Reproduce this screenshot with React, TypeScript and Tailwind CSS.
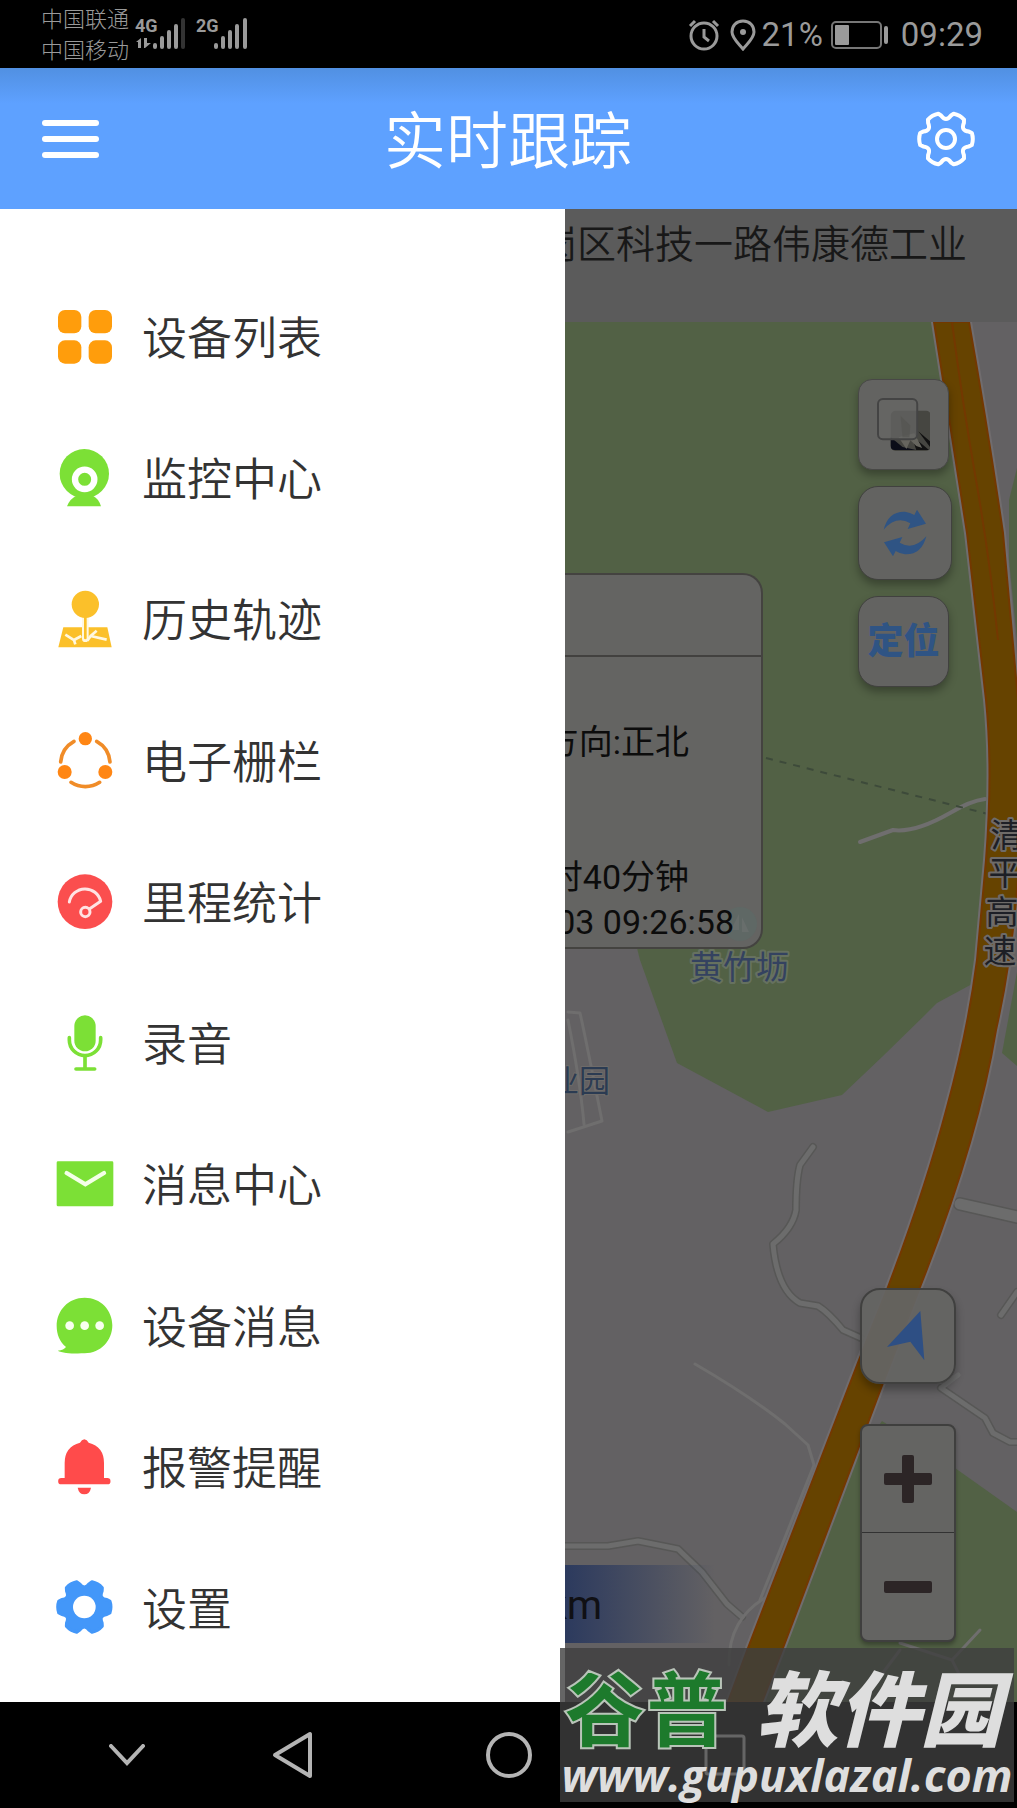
import { useState, type ReactNode } from 'react'

const point = (r: number, deg: number) => {
  const a = (deg * Math.PI) / 180
  return `${(r * Math.cos(a)).toFixed(1)} ${(r * Math.sin(a)).toFixed(1)}`
}

// 六齿齿轮，中心在原点
const gearPath = (r: number) =>
  [0, 60, 120, 180, 240, 300]
    .map(
      (deg, i) =>
        `${i === 0 ? 'M' : 'L'}${point(r * 0.98, deg - 13)} Q${point(r * 1.03, deg)} ${point(r * 0.98, deg + 13)} L${point(r * 0.89, deg + 18)} Q${point(r * 0.62, deg + 30)} ${point(r * 0.89, deg + 42)}`
    )
    .join(' ') + 'Z'

interface MenuItem {
  id: string
  label: string
  icon: ReactNode
}

const menuItems: MenuItem[] = [
  {
    id: 'devices',
    label: '设备列表',
    icon: (
      <g fill="#ff9d0c">
        <rect x="6" y="6" width="70" height="70" rx="21" />
        <rect x="98" y="6" width="70" height="70" rx="21" />
        <rect x="6" y="97" width="70" height="70" rx="21" />
        <rect x="98" y="97" width="70" height="70" rx="21" />
      </g>
    ),
  },
  {
    id: 'monitor',
    label: '监控中心',
    icon: (
      <>
        <circle cx="85" cy="74" r="74" fill="#7ce036" />
        <path d="M33 172Q42 148 62 140H110Q128 148 135 172Z" fill="#7ce036" />
        <circle cx="86" cy="91" r="29" fill="#7ce036" stroke="#fff" strokeWidth="19" />
      </>
    ),
  },
  {
    id: 'history',
    label: '历史轨迹',
    icon: (
      <>
        <path d="M22 112H154L167 172H7Z" fill="#fbc02a" />
        <path
          d="M28 134L54 150L58 163M54 150L76 138M94 152L104 138L122 122M104 138L152 149"
          fill="none"
          stroke="#fff8e0"
          strokeWidth="8"
        />
        <path d="M88 84V146" stroke="#fff8e0" strokeWidth="20" strokeLinecap="round" />
        <path d="M88 80V144" stroke="#fbc02a" strokeWidth="8" strokeLinecap="round" />
        <circle cx="88" cy="43" r="41" fill="#fbc02a" />
      </>
    ),
  },
  {
    id: 'fence',
    label: '电子栅栏',
    icon: (
      <>
        <g fill="none" stroke="#f08c28" strokeWidth="11" strokeLinecap="round">
          <path d="M54 28A78 78 0 0 0 14 90" />
          <path d="M122 28A78 78 0 0 1 162 90" />
          <path d="M45 151A78 78 0 0 0 131 151" />
        </g>
        <g fill="#ff8614">
          <circle cx="88" cy="20" r="20" />
          <circle cx="26" cy="120" r="21" />
          <circle cx="148" cy="120" r="21" />
        </g>
      </>
    ),
  },
  {
    id: 'mileage',
    label: '里程统计',
    icon: (
      <>
        <circle cx="87" cy="86" r="82" fill="#fb4e4e" />
        <g fill="none" stroke="#ffe3e3" strokeWidth="9" strokeLinecap="round" strokeLinejoin="round">
          <path d="M40 87A48 48 0 0 1 134 85L100 108" />
          <circle cx="88" cy="117" r="14" />
        </g>
      </>
    ),
  },
  {
    id: 'record',
    label: '录音',
    icon: (
      <>
        <rect x="55" y="4" width="64" height="108" rx="32" fill="#7ce036" />
        <g fill="none" stroke="#7ce036" strokeWidth="11" strokeLinecap="round">
          <path d="M40 71V78A47 47 0 0 0 134 78V71" />
          <path d="M87 126V164M60 165H116" />
        </g>
      </>
    ),
  },
  {
    id: 'messages',
    label: '消息中心',
    icon: (
      <>
        <rect x="2" y="19" width="170" height="135" rx="4" fill="#7ce036" />
        <path
          d="M32 54L88 88L144 54"
          fill="none"
          stroke="#f4ffe8"
          strokeWidth="13"
          strokeLinecap="round"
        />
      </>
    ),
  },
  {
    id: 'deviceMessages',
    label: '设备消息',
    icon: (
      <>
        <path
          d="M86 2C134 2 169 39 169 85S134 169 86 169C52 170 20 169 5 161Q24 159 30 150C11 135 2 112 2 87C2 39 38 2 86 2Z"
          fill="#7ce036"
        />
        <g fill="#f8fff0">
          <circle cx="41" cy="86" r="13" />
          <circle cx="86" cy="86" r="13" />
          <circle cx="131" cy="86" r="13" />
        </g>
      </>
    ),
  },
  {
    id: 'alarm',
    label: '报警提醒',
    icon: (
      <g fill="#ff4b4b">
        <path d="M85 4Q93 5 98 14Q144 26 144 75V120H154A9 9 0 0 1 154 139H16A9 9 0 0 1 16 120H26V75Q26 26 72 14Q77 5 85 4Z" />
        <path d="M65 149H105Q101 169 85 169Q69 169 65 149Z" />
      </g>
    ),
  },
  {
    id: 'settings',
    label: '设置',
    icon: (
      <g transform="translate(85 84)">
        <path d={gearPath(80)} fill="#4397f9" stroke="#4397f9" strokeWidth="10" strokeLinejoin="round" />
        <circle r="34" fill="#fff" />
      </g>
    ),
  },
]

function StatusBar() {
  return (
    <div className="flex h-[68px] shrink-0 items-center bg-black pl-[41px] pr-[34px] text-[#9a9a9a]">
      <div className="pt-0.5 text-[22px] leading-[31px] font-light">
        <p>中国联通</p>
        <p>中国移动</p>
      </div>
      <svg width="114" height="34" viewBox="135 17 114 34" className="ml-[6px] overflow-visible" fill="#9a9a9a">
        <text x="135" y="32" fontSize="18" fontWeight="700" fontFamily="Roboto, sans-serif">
          4G
        </text>
        <text x="196" y="32" fontSize="18" fontWeight="700" fontFamily="Roboto, sans-serif">
          2G
        </text>
        <path d="M136 42L141 38V48H138V42ZM144 38H147V43H151L145 48H144Z" />
        <g strokeWidth="4" strokeLinecap="round" stroke="#9a9a9a">
          <path d="M155 45V47M162 38V47M169 32V47M176 26V47" />
          <path d="M183 20V47" stroke="#333" />
          <path d="M216 45V47M223 38V47M230 32V47M237 26V47M245 20V47" />
        </g>
      </svg>
      <div className="ml-auto flex items-center pt-0.5 text-[33px] leading-10">
        <svg width="32" height="32" viewBox="0 0 32 32" fill="none" stroke="currentColor" strokeWidth="3">
          <circle cx="16" cy="17" r="13" />
          <path d="M16 10V18L21 22M2 7L7 2M25 2L30 7" />
        </svg>
        <svg width="26" height="32" viewBox="0 0 26 32" fill="none" className="ml-2.5">
          <path
            d="M13 2C6 2 2 7 2 13C2 19 8 24 13 30C18 24 24 19 24 13C24 7 20 2 13 2Z"
            stroke="currentColor"
            strokeWidth="3"
          />
          <circle cx="13" cy="13" r="3" fill="currentColor" />
        </svg>
        <span className="ml-1.5">21%</span>
        <svg width="58" height="28" viewBox="0 0 58 28" fill="none" className="ml-2">
          <rect x="1" y="1" width="49" height="26" rx="4" stroke="#777" strokeWidth="2" />
          <rect x="4" y="4" width="14" height="20" rx="1" fill="currentColor" />
          <path d="M55 7V21" stroke="currentColor" strokeWidth="4" strokeLinecap="round" />
        </svg>
        <span className="ml-3">09:29</span>
      </div>
    </div>
  )
}

function MapCanvas() {
  return (
    <svg
      className="absolute inset-0 h-full w-full"
      viewBox="565 322 452 1380"
      preserveAspectRatio="xMinYMin slice"
      fontFamily="Roboto, 'Noto Sans CJK SC', sans-serif"
    >
      <rect x="565" y="322" width="2000" height="1380" fill="#636163" />

      {/* 绿地 */}
      <g fill="#526145">
        <path d="M565 322H934L967 533L988 700V813L974 983L937 1003Q890 1050 842 1095L768 1112L677 1063L640 960L600 800L565 760Z" />
        <path d="M1017 468L1009 500V560L1017 640Z" />
        <path d="M1017 972L1002 1053L1017 1066Z" />
        <path d="M848 1470L882 1421L955 1468L1017 1512V1702H740Z" />
      </g>

      {/* 小路 */}
      <g fill="none" strokeLinecap="round" strokeLinejoin="round">
        <g stroke="#575756" strokeWidth="8">
          <path d="M813 1147L800 1165Q796 1180 796 1210Q793 1228 773 1244Q777 1290 800 1303L818 1306Q828 1312 843 1330L861 1338" />
          <path d="M565 1546H608L638 1541L678 1549L702 1572L727 1604L742 1617" />
          <path d="M941 1388L985 1418L993 1433L1010 1442H1017" />
          <path d="M1001 1315L1017 1292" />
          <path d="M960 1204L1017 1217" strokeWidth="14" />
        </g>
        <g stroke="#6c6c6c" strokeWidth="5">
          <path d="M813 1147L800 1165Q796 1180 796 1210Q793 1228 773 1244Q777 1290 800 1303L818 1306Q828 1312 843 1330L861 1338" />
          <path d="M565 1546H608L638 1541L678 1549L702 1572L727 1604L742 1617" />
          <path d="M941 1388L958 1375M941 1388L985 1418L993 1433L1010 1442H1017" />
          <path d="M1001 1315L1017 1292" />
          <path d="M960 1204L1017 1217" strokeWidth="11" />
        </g>
        <g stroke="#6f6e6e" strokeWidth="3">
          <path d="M695 1364Q750 1396 785 1424L808 1445L814 1465L760 1600" />
          <path d="M765 1598Q728 1620 729 1665" />
          <path d="M568 1012L580 1013Q584 1030 602 1121L568 1132M568 1020Q580 1080 584 1124" />
          <path d="M860 842L893 830Q915 833 950 813Q970 801 985 799" strokeWidth="4" />
          <path d="M900 1643L952 1660L980 1630M952 1660L962 1680M900 1650L870 1690" />
        </g>
        <path d="M766 758L992 815" stroke="#3d4a3a" strokeWidth="2" strokeDasharray="7 7" strokeLinecap="butt" />
      </g>

      {/* 高速 */}
      <path
        d="M934 322Q946 400 967 533L986 700Q993 770 986 860L977 960Q968 1030 947 1107Q925 1190 888 1287L859 1360L748 1648L728 1702H762L783 1648L883 1383L920 1287Q978 1140 996 1030Q1014 950 1020 850Q1022 770 1018 700L1003 533Q988 430 969 322Z"
        fill="#664300"
        stroke="#706c6e"
        strokeWidth="6"
      />
      <path
        d="M934 322Q946 400 967 533L986 700Q993 770 986 860L977 960Q968 1030 947 1107Q925 1190 888 1287L859 1360L748 1648L728 1702H762L783 1648L883 1383L920 1287Q978 1140 996 1030Q1014 950 1020 850Q1022 770 1018 700L1003 533Q988 430 969 322Z"
        fill="#664300"
        stroke="#733800"
        strokeWidth="2"
      />
      <path d="M952 322Q962 400 976 480T998 640" fill="none" stroke="#733800" strokeWidth="2" />

      {/* 地名 */}
      <g fontSize="33" stroke="#6e6b69" strokeWidth="4" paintOrder="stroke" strokeLinejoin="round">
        <g fill="#1d1f26" textAnchor="middle">
          <text x="1007" y="847">清</text>
          <text x="1005" y="885">平</text>
          <text x="1002" y="924">高</text>
          <text x="1000" y="963">速</text>
        </g>
        <text x="690" y="979" fill="#344260" stroke="#66715f">
          黄竹坜
        </text>
        <text x="610" y="1092" fontSize="31" textAnchor="end" fill="#2b3b52" strokeWidth="2">
          业园
        </text>
      </g>
    </svg>
  )
}

function InfoCard() {
  return (
    <div className="absolute top-[251px] left-0 w-[198px] overflow-hidden rounded-r-[20px] border-2 border-l-0 border-[#444340] bg-[#646462] pb-[2px] text-[34px] leading-[45px] whitespace-nowrap text-[#0c0c0c]">
      <svg width="34" height="34" viewBox="0 0 34 34" className="absolute right-1 bottom-1.5">
        <circle cx="17" cy="17" r="17" fill="#5f6865" />
        <path d="M16 7V23H8ZM19 10L26 25H19Z" fill="#686e6c" />
      </svg>
      <div className="h-[82px] border-b-2 border-[#42413f]" />
      <div className="relative pt-[63px]">
        <p className="flex justify-end pr-[72px]">方向:正北</p>
        <p className="mt-[90px] flex justify-end pr-[72px]">时40分钟</p>
        <p className="flex justify-end pr-[27px]">03 09:26:58</p>
      </div>
    </div>
  )
}

function MapPane() {
  const [zoom, setZoom] = useState(16)

  return (
    <section className="flex min-w-0 flex-1 flex-col overflow-hidden bg-[#5b5b5b]">
      <div className="flex h-[113px] justify-end overflow-hidden pt-2 pr-[50px]">
        <p className="text-[39px] leading-[56px] font-[350] whitespace-nowrap text-[#181818]">
          岗区科技一路伟康德工业
        </p>
      </div>
      <div className="relative flex-1 overflow-hidden" data-zoom={zoom}>
        <MapCanvas />
        <InfoCard />

        {/* 右上角按钮 */}
        <div className="absolute top-[57px] right-[65px] flex flex-col items-start gap-4">
          <button
            aria-label="图层"
            className="h-[91px] w-[91px] rounded-[14px] border border-[#484846] bg-[#636361] p-[18px] shadow-[0_5px_8px_rgba(0,0,0,0.3)]"
          >
            <svg viewBox="0 0 54 54" className="h-full w-full">
              <rect x="14" y="13" width="41" height="41" rx="5" fill="#464641" />
              <path d="M14 40L26 50L40 53H18Q14 53 14 49Z" fill="#0b0d18" />
              <path d="M35 38L53 53H40ZM42 34L54 44V50Z" fill="#111" />
              <path d="M22 40L38 36L46 51L40 49L34 43L30 52Z" fill="#66655e" />
              <rect x="1" y="1" width="40" height="41" rx="5" fill="#666664" fillOpacity="0.75" stroke="#444" strokeWidth="2" />
              <path d="M24 18L34 28L33 40H26Z" fill="#535350" opacity="0.6" />
            </svg>
          </button>
          <button
            aria-label="刷新"
            className="flex h-[94px] w-[94px] items-center justify-center rounded-[20px] border border-[#41413f] bg-[#636361] shadow-[0_5px_8px_rgba(0,0,0,0.3)]"
          >
            <svg width="44" height="48" viewBox="-66 -72 132 144" fill="#2f5484">
              <path d="M-64 -10Q-50 -66 0 -64Q16 -62 28 -54L36 -70L63 -28L8 -12L16 -29Q-26 -54 -64 -10Z" />
              <path d="M-64 -10Q-50 -66 0 -64Q16 -62 28 -54L36 -70L63 -28L8 -12L16 -29Q-26 -54 -64 -10Z" transform="rotate(180)" />
            </svg>
          </button>
          <button className="h-[91px] w-[91px] rounded-[20px] border border-[#41413f] bg-[#636361] text-[36px] leading-[88px] font-black text-[#2f5484] shadow-[0_5px_8px_rgba(0,0,0,0.3)]">
            定位
          </button>
        </div>

        {/* 导航与缩放 */}
        <div className="absolute right-[61px] bottom-[60px] flex w-[96px] flex-col gap-10">
          <button
            aria-label="导航"
            className="flex h-[96px] items-center justify-center rounded-[20px] border-2 border-[#40403f] bg-[#646462]/95 pr-1 shadow-[0_6px_8px_rgba(0,0,0,0.3)]"
          >
            <svg width="38" height="50" viewBox="0 0 114 150" fill="#2e4f84">
              <path d="M100 0L112 148L70 92L0 108Z" />
            </svg>
          </button>
          <div className="overflow-hidden rounded-[8px] border-2 border-[#3f3f3e] bg-[#646462] shadow-[0_3px_4px_rgba(0,0,0,0.3)]">
            <button
              aria-label="放大"
              onClick={() => setZoom((z) => Math.min(z + 1, 20))}
              className="flex h-[107px] w-full items-center justify-center border-b border-[#323232]"
            >
              <svg width="48" height="48" viewBox="0 0 48 48" fill="#2c2526">
                <rect y="18" width="48" height="12" rx="2" />
                <rect x="18" width="12" height="48" rx="2" />
              </svg>
            </button>
            <button
              aria-label="缩小"
              onClick={() => setZoom((z) => Math.max(z - 1, 3))}
              className="flex h-[107px] w-full items-center justify-center"
            >
              <svg width="48" height="12" viewBox="0 0 48 12" fill="#2c2526">
                <rect width="48" height="12" rx="2" />
              </svg>
            </button>
          </div>
        </div>

        {/* 里程 */}
        <div className="absolute bottom-[59px] left-0 flex h-[78px] w-[150px] items-center overflow-hidden bg-linear-to-r from-[#2c3a5e] to-transparent pt-1">
          <p className="flex w-[37px] justify-end text-[40px] leading-[60px] text-[#101014]">km</p>
        </div>
      </div>
    </section>
  )
}

function NavBar() {
  return (
    <nav className="flex h-[106px] shrink-0 items-center bg-black text-[#b4b4b4]">
      <div className="flex flex-1 justify-end">
        <button aria-label="收起" className="mr-10">
          <svg width="36" height="22" viewBox="0 0 36 22" fill="none" stroke="currentColor" strokeWidth="4" strokeLinecap="round">
            <path d="M2 2L18 19L34 2" />
          </svg>
        </button>
      </div>
      <button aria-label="返回" className="flex w-[216px] justify-center">
        <svg width="42" height="50" viewBox="0 0 42 50" fill="none" stroke="currentColor" strokeWidth="4" strokeLinejoin="round">
          <path d="M38 4V46L3 25Z" />
        </svg>
      </button>
      <button aria-label="主页" className="flex w-[216px] justify-center">
        <svg width="48" height="48" viewBox="0 0 48 48" fill="none" stroke="currentColor" strokeWidth="4">
          <circle cx="24" cy="24" r="21" />
        </svg>
      </button>
      <button aria-label="最近任务" className="flex w-[216px] justify-center">
        <svg width="42" height="42" viewBox="0 0 42 42" fill="none" stroke="#fff" strokeWidth="3">
          <rect x="2" y="2" width="38" height="38" rx="2" />
        </svg>
      </button>
      <div className="flex-1" />
    </nav>
  )
}

export default function App() {
  const [open, setOpen] = useState(true)

  return (
    <div className="relative flex min-h-screen flex-col overflow-hidden bg-white font-[Roboto,'Noto_Sans_CJK_SC',sans-serif]">
      <StatusBar />
      <header className="flex h-[141px] shrink-0 items-center justify-between bg-[#5ea1ff] bg-linear-to-b from-[#5190e2] to-[#5ea1ff] to-25% px-[42px] text-white">
        <button aria-label="菜单" onClick={() => setOpen(!open)} className="flex w-[57px] flex-col gap-[10px]">
          <span className="h-[6px] rounded-full bg-white" />
          <span className="h-[6px] rounded-full bg-white" />
          <span className="h-[6px] rounded-full bg-white" />
        </button>
        <h1 className="pt-2 text-[62px] leading-[80px] font-[350]">实时跟踪</h1>
        <button aria-label="设置">
          <svg width="58" height="58" viewBox="-29 -29 58 58" fill="none" stroke="#fff" strokeWidth="4" strokeLinejoin="round">
            <path d={gearPath(27)} />
            <circle r="9" />
          </svg>
        </button>
      </header>

      <main className="flex flex-1">
        {open && (
          <ul className="flex w-5/9 flex-col bg-white pt-[57px] pb-[23px]">
            {menuItems.map((item) => (
              <li key={item.id} className="flex flex-1">
                <button className="flex min-h-[100px] w-full items-center gap-7 pl-14 text-left text-[45px] leading-[60px] font-[350] text-[#333]">
                  <svg width="58" height="58" viewBox="0 0 174 174">
                    {item.icon}
                  </svg>
                  <span className="pt-1.5">{item.label}</span>
                </button>
              </li>
            ))}
          </ul>
        )}
        <MapPane />
      </main>

      <NavBar />

      {/* 水印 */}
      <div className="pointer-events-none absolute right-[3px] bottom-[6px] flex h-[154px] w-[454px] flex-col justify-end bg-[#3e3e3e]/80 pb-1 whitespace-nowrap text-[#dedede]">
        <p className="flex justify-between pr-3 pl-1 text-[82px] leading-[80px] font-black">
          <span className="text-[#1d7a2c] [-webkit-text-stroke:2px_#b9c4b9]">谷普</span>
          <span className="italic">软件园</span>
        </p>
        <p className="text-center font-['Open_Sans',sans-serif] text-[45px] leading-[46px] font-bold italic">
          www.gupuxlazal.com
        </p>
      </div>
    </div>
  )
}
